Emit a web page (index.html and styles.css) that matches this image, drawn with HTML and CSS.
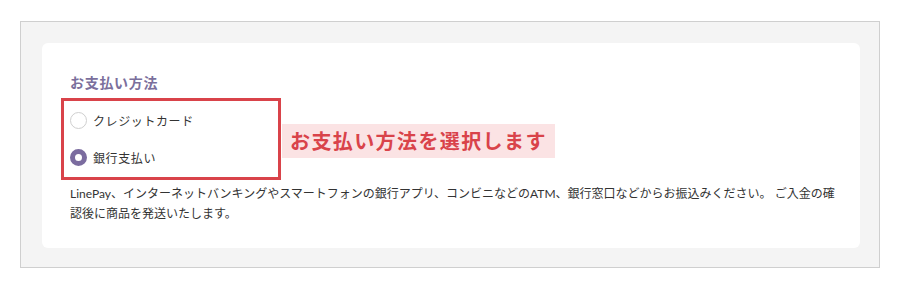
FILE: index.html
```html
<!DOCTYPE html>
<html lang="ja">
<head>
  <meta charset="UTF-8">
  <meta name="viewport" content="width=device-width, initial-scale=1.0">
  <title>お支払い方法</title>
  <link rel="stylesheet" href="styles.css">
</head>
<body>
  <div class="frame">
    <div class="card">
      <h2 class="section-title">お支払い方法</h2>

      <!-- 支払い方法の選択 -->
      <div class="select-row">
        <div class="highlight-box">
          <label class="radio">
            <span class="radio-mark"></span>
            <span>クレジットカード</span>
          </label>
          <label class="radio checked">
            <span class="radio-mark"></span>
            <span>銀行支払い</span>
          </label>
        </div>
        <div class="callout">お支払い方法を選択します</div>
      </div>

      <p class="note">LinePay、インターネットバンキングやスマートフォンの銀行アプリ、コンビニなどのATM、銀行窓口などからお振込みください。 ご入金の確認後に商品を発送いたします。</p>
    </div>
  </div>
</body>
</html>
```

FILE: styles.css
```css
body {
  margin: 0;
  padding: 0;
  background-color: #fff;
  font-family: Lato, "Noto Sans CJK JP", sans-serif;
  color: #333;
}

.frame {
  width: 818px;
  margin: 21px 0 0 20px;
  padding: 21px 19px 19px 21px;
  background-color: #f4f4f4;
  border: 1px solid #cfcfcf;
}

.card {
  background-color: #fff;
  border-radius: 6px;
  padding: 28px 22px 24px 28px;
}

.section-title {
  margin: 0 0 3px 0;
  font-size: 14px;
  line-height: 24px;
  font-weight: bold;
  letter-spacing: 0.05em;
  color: #7b6f9c;
}

.select-row {
  display: flex;
  align-items: center;
  gap: 1px;
  margin-left: -9px;
}

.highlight-box {
  width: 202px;
  border: 3px solid #d9434a;
  padding: 1px 6px;
}

.radio {
  display: flex;
  align-items: center;
  gap: 6px;
  height: 37px;
  font-size: 12px;
  letter-spacing: 0.05em;
  color: #333;
}

.radio-mark {
  box-sizing: border-box;
  width: 17px;
  height: 17px;
  border: 1px solid #cfcfcf;
  border-radius: 50%;
  background-color: #fff;
}

.radio.checked .radio-mark {
  border: 5px solid #7b6c9f;
}

.callout {
  padding: 0 8px;
  height: 34px;
  line-height: 34px;
  margin-top: 3px;
  background-color: #fbe3e4;
  color: #d9434a;
  font-size: 20px;
  font-weight: bold;
  letter-spacing: 0.07em;
}

.note {
  margin: 4px 0 0 0;
  font-size: 12px;
  line-height: 20px;
  color: #333;
}
```
